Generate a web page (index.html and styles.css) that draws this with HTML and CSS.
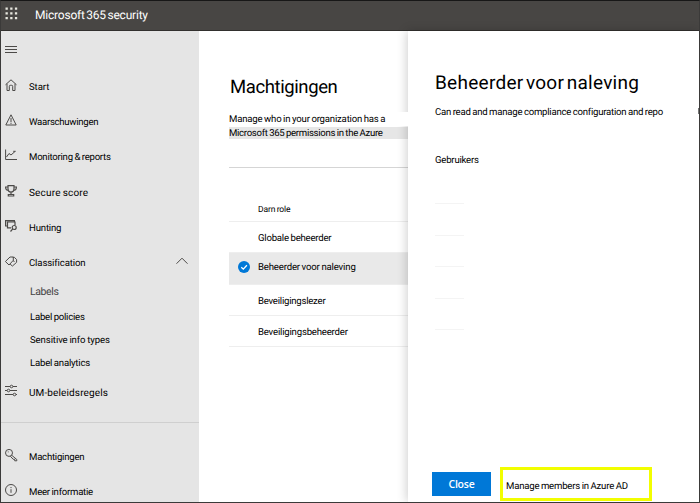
FILE: index.html
```html
<!DOCTYPE html>
<html lang="nl">
<head>
<meta charset="utf-8">
<title>Microsoft 365 security</title>
<link rel="stylesheet" href="styles.css">
</head>
<body>
<div class="window">
<header class="topbar">
  <svg class="waffle" width="13" height="13" viewBox="0 0 13 13" fill="#e8e8e0"><path d="M.5.5h2.300v2.300H.5zM5.200.5h2.300v2.300H5.200zM9.900.5h2.300v2.300H9.900zM.5 5.200h2.300v2.300H.5zM5.200 5.200h2.300v2.300H5.200zM9.900 5.200h2.300v2.300H9.900zM.5 9.900h2.300v2.300H.5zM5.200 9.900h2.300v2.300H5.200zM9.900 9.900h2.300v2.300H9.900z"/></svg>
  <span class="brand">Microsoft 365 security</span>
</header>
<div class="layout">
  <nav class="sidebar">
    <div class="menu"><svg class="icon" viewBox="0 0 12 12"><path d="M0 3.500h12M0 6.500h12M0 9.500h12"/></svg></div>
    <a class="item"><svg class="icon" viewBox="0 0 12 12"><path d="M.5 5.800 6 .8l5.500 5M2 4.800v6.700h2.300V7.300q0-1 1-1h1.400q1 0 1 1v4.200H10V4.800"/></svg><span class="w-start">Start</span></a>
    <a class="item"><svg class="icon" viewBox="0 0 12 12"><path d="M6 .8.8 11h10.400zM6 4v4M6 8.700v1.200"/></svg><span class="w-warn">Waarschuwingen</span></a>
    <a class="item"><svg class="icon" viewBox="0 0 12 12"><path d="M.6.500v10H12M1.500 8 4 4.500l2 1.500 4-3.500M8.200 2.300h2.500"/></svg><span class="w-mon">Monitoring &amp; reports</span></a>
    <a class="item"><svg class="icon bold" viewBox="0 0 12 12"><path d="M3 .7h6V4Q9 7 6 7T3 4zM3 2H.6q0 3.500 3 3.500M9 2h2.400q0 3.500-3 3.500M6 7v3M3.300 11V9.500h5.400V11z"/></svg><span class="w-score">Secure score</span></a>
    <a class="item"><svg class="icon bold" viewBox="0 0 12 12"><path d="M6 7.800H2.500V2H10v3M2.500 6H.6V.6h8.800V2M5.500 11.500l2.300-2.600"/><circle cx="9.200" cy="7.500" r="2"/></svg><span class="w-hunt">Hunting</span></a>
    <a class="item"><svg class="icon" viewBox="0 0 12 12"><path d="M.4 6.500 5 2h3.300v3.300L4 10zM7.800 2.300h1.500l2.300 2.200v2.800L7.500 11 5.200 9.300M8.300 5.300 9.300 7"/></svg><span class="w-class">Classification</span><svg class="chevron" viewBox="0 0 12 8"><path d="m.5 6.700 5.500-5.500 5.500 5.500"/></svg></a>
    <div class="sub">
      <a class="current"><span class="w-labels">Labels</span></a>
      <a><span class="w-policies">Label policies</span></a>
      <a><span class="w-types">Sensitive info types</span></a>
      <a><span class="w-analytics">Label analytics</span></a>
    </div>
    <a class="item"><svg class="icon" viewBox="0 0 12 12"><path d="M0 1.500h5M8 1.500h4M0 5.500h2M5 5.500h7M0 9.500h8M11 9.500h1"/><circle cx="6.500" cy="1.500" r="1.300"/><circle cx="3.500" cy="5.500" r="1.300"/><circle cx="9.500" cy="9.500" r="1.300"/></svg><span class="w-um">UM-beleidsregels</span></a>
    <div class="divider"></div>
    <a class="item"><svg class="icon" viewBox="0 0 12 12"><circle cx="4" cy="3.900" r="3.500"/><path d="m6.600 6.200 5.200 4.300v1.300H9.700v-1.500H8.200L5.300 7.200M2.800 2.900h.8"/></svg><span class="w-mach">Machtigingen</span></a>
    <a class="item"><svg class="icon" viewBox="0 0 12 12"><circle cx="6" cy="6" r="5.500"/><path d="M6 5.200v3.600M6 3v1.100"/></svg><span class="w-meer">Meer informatie</span></a>
  </nav>
  <main class="content">
    <h1>Machtigingen</h1>
    <p class="line intro"><span class="w-desc1">Manage who in your organization has a</span></p>
    <p class="line shaded"><span class="w-desc2">Microsoft 365 permissions in the Azure</span></p>
    <div class="table">
      <div class="row head"><span class="w-role">Darn role</span></div>
      <div class="row globale"><span class="w-globale">Globale beheerder</span></div>
      <div class="row selected"><svg class="check" viewBox="0 0 12 12"><circle cx="6" cy="6" r="6" fill="#0078d7"/><path d="m3.300 6.200 2 1.900 3.600-3.800" fill="none" stroke="#fff" stroke-width="1.300"/></svg><span class="w-naleving">Beheerder voor naleving</span></div>
      <div class="row lezer"><span class="w-lezer">Beveiligingslezer</span></div>
      <div class="row globale"><span class="w-beheer">Beveiligingsbeheerder</span></div>
    </div>
  </main>
  <aside class="panel">
    <h2>Beheerder voor naleving</h2>
    <p class="summary">Can read and manage compliance configuration and repo</p>
    <p class="users">Gebruikers</p>
    <div class="people"><i></i><i></i><i></i><i></i><i></i></div>
    <div class="actions"><button class="close">Close</button><a class="manage">Manage members in Azure AD</a></div>
    <span class="clip"></span>
  </aside>
</div>
</div>
</body>
</html>
```
FILE: styles.css
```css
* { box-sizing: border-box; }
body { margin: 0; font: 9.600px/14px Roboto, "Liberation Sans", sans-serif; color: #000; background: #fff; text-rendering: geometricPrecision; word-spacing: -.5px; }
h1, h2, p { margin: 0; font-weight: 400; white-space: nowrap; }
.window { width: 700px; height: 503px; overflow: hidden; border: 1px solid #3b3a39; border-top-color: #171717; display: flex; flex-direction: column; }
.topbar { height: 30px; flex: none; display: flex; align-items: center; background: #484644; border-bottom: 1px solid #32302e; color: #fff; padding-left: 4px; }
.waffle { margin-top: -5px; }
.brand { font-size: 12px; letter-spacing: -.2px; word-spacing: -1.300px; margin: -1px 0 0 17px; white-space: nowrap; }
.layout { flex: 1; min-height: 0; display: flex; }
.sidebar { width: 198px; flex: none; background: #e5e5e5; }
.menu { height: 38px; padding: 12px 0 0 4px; }
.icon { width: 12px; height: 12px; flex: none; display: block; fill: none; stroke: #4c4a48; stroke-width: 1; overflow: visible; }
.icon.bold { stroke-width: 1.200; }
.item { height: 35.2px; display: flex; align-items: center; padding-left: 4px; white-space: nowrap; }
.item .icon { margin-top: -3px; }
.item span { margin: 3px 0 0 12px; }
.chevron { width: 12px; height: 8px; fill: none; stroke: #4c4a48; margin: -4px 11px 0 auto; }
.sub { height: 94.300px; padding-left: 29px; display: flex; flex-direction: column; }
.sub a { height: 23px; padding-top: 3px; display: flex; align-items: center; white-space: nowrap; }
.sub .current { margin-bottom: 2.300px; padding-top: 1px; color: #444; font-size: 10.500px; }
.divider { height: 1px; background: #cfcfcf; margin: 12px 0 16.500px; }
.content { width: 209px; flex: none; padding-left: 30px; }
h1 { font-size: 18.500px; letter-spacing: -.4px; line-height: 26px; margin: 43px 0 12px 1px; }
.line { height: 14px; line-height: 16px; }
.intro { position: relative; z-index: 1; background: linear-gradient(90deg, transparent 160px, #fff 165px); }
.shaded { height: 12px; line-height: 14px; background: #e6e6e6; margin-top: 1px; }
.table { margin-top: 28px; border-top: 1px solid #d5d5d5; }
.row { height: 31.300px; display: flex; align-items: center; padding-left: 29px; border-bottom: 1px solid #eee; white-space: nowrap; }
.row.head { height: 54px; padding-top: 31px; font-size: 8.500px; }
.row.globale { padding-top: 4px; }
.row.selected { background: #e9e9e9; padding: 0 0 2px 9px; }
.selected span { margin-top: 2px; }
.row.lezer { padding-top: 5px; }
.check { width: 12px; height: 12px; flex: none; margin-right: 8px; }
.panel { flex: 1; position: relative; background: #fff; padding: 38px 0 0 27px; box-shadow: -1px 0 10px rgba(0, 0, 0, .2); }
h2 { font-size: 19px; letter-spacing: .27px; word-spacing: -2.500px; line-height: 28px; }
.summary { margin-top: 9px; letter-spacing: -.24px; }
.users { margin-top: 34px; letter-spacing: -.22px; }
.people { height: 158px; margin-top: 5px; }
.people i { display: block; width: 29px; height: 31.400px; border-bottom: 1px solid #f4f4f4; }
.actions { display: flex; margin: 136px 0 0 -3px; align-items: center; }
.close { width: 59px; height: 24px; padding: 0; border: 0; background: #0078d7; color: #fff; font: 600 10.500px "Open Sans", sans-serif; letter-spacing: -.2px; }
.manage { width: 152px; height: 34px; margin-left: 9px; border: 3px solid #f2fe00; padding: 7px 0 0 3px; line-height: 20px; white-space: nowrap; letter-spacing: -.22px; }
.clip { position: absolute; right: 0; top: 77px; width: 1px; height: 6px; background: #777; }
.w-start { letter-spacing: -.1px; }
.w-warn { letter-spacing: -.28px; }
.w-mon { letter-spacing: -.25px; }
.w-score { font-size: 10px; letter-spacing: .17px; }
.w-hunt { letter-spacing: -.18px; }
.w-class { letter-spacing: -.12px; }
.w-labels { letter-spacing: -.4px; }
.w-policies { letter-spacing: -.24px; }
.w-types { letter-spacing: -.1px; }
.w-analytics { letter-spacing: -.21px; }
.w-um { font-size: 10px; letter-spacing: .13px; }
.w-mach { letter-spacing: -.24px; }
.w-meer { letter-spacing: -.24px; }
.w-desc1 { letter-spacing: -.2px; }
.w-desc2 { letter-spacing: -.3px; }
.w-role { letter-spacing: -.15px; }
.w-globale { letter-spacing: -.22px; }
.w-naleving { letter-spacing: -.17px; }
.w-lezer { letter-spacing: -.24px; }
.w-beheer { letter-spacing: -.2px; }
```
